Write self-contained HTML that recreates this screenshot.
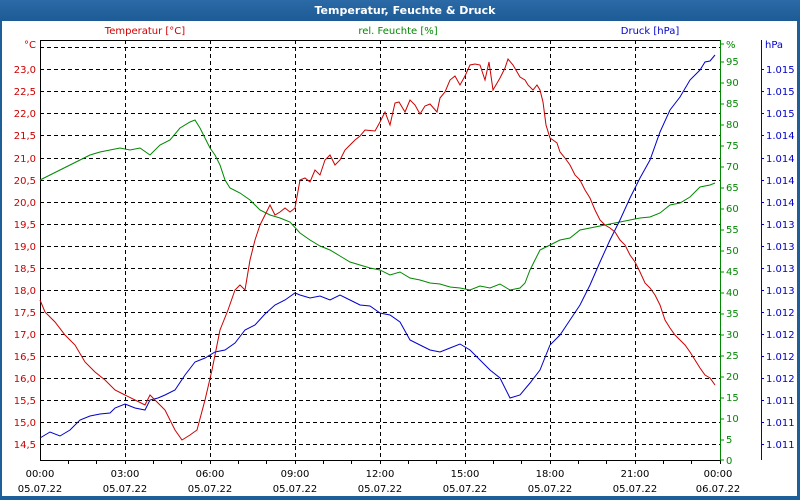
<!DOCTYPE html>
<html><head><meta charset="utf-8"><style>
html,body{margin:0;padding:0;width:800px;height:500px;overflow:hidden;background:#fff;font-family:"Liberation Sans",sans-serif}
</style></head><body>
<svg width="800" height="500" xmlns="http://www.w3.org/2000/svg" font-family="Tahoma,'DejaVu Sans','Liberation Sans',sans-serif" font-size="10">
<defs><linearGradient id="g" x1="0" y1="0" x2="0" y2="1"><stop offset="0" stop-color="#2b6aa6"/><stop offset="1" stop-color="#1d5b96"/></linearGradient></defs>
<rect x="0" y="0" width="800" height="500" fill="#1f5f99"/>
<rect x="2" y="21" width="795" height="475" fill="#fff"/>
<rect x="0" y="0" width="800" height="21" fill="url(#g)"/>
<text x="405" y="14" fill="#fff" font-weight="bold" font-size="11" text-anchor="middle">Temperatur, Feuchte &amp; Druck</text>
<text x="145" y="34" fill="#c00" text-anchor="middle">Temperatur [°C]</text>
<text x="398" y="34" fill="#080" text-anchor="middle">rel. Feuchte [%]</text>
<text x="650" y="34" fill="#00c" text-anchor="middle">Druck [hPa]</text>
<g stroke="#000" stroke-dasharray="4,3" stroke-width="1">
<path d="M40 47.5H720M40 69.5H720M40 91.5H720M40 113.5H720M40 135.5H720M40 158.5H720M40 180.5H720M40 202.5H720M40 224.5H720M40 246.5H720M40 268.5H720M40 290.5H720M40 312.5H720M40 334.5H720M40 356.5H720M40 378.5H720M40 400.5H720M40 422.5H720M40 444.5H720"/>
<path d="M125.5 40V460M210.5 40V460M295.5 40V460M380.5 40V460M465.5 40V460M550.5 40V460M635.5 40V460"/>
</g>
<g stroke="#000" fill="none"><path d="M40.5 40V460.5H720"/><path d="M40 40.5H720"/>
<path d="M68.5 460v4M96.5 460v4M125.5 460v4M153.5 460v4M181.5 460v4M210.5 460v4M238.5 460v4M266.5 460v4M295.5 460v4M323.5 460v4M351.5 460v4M380.5 460v4M408.5 460v4M436.5 460v4M465.5 460v4M493.5 460v4M521.5 460v4M550.5 460v4M578.5 460v4M606.5 460v4M635.5 460v4M663.5 460v4M691.5 460v4M720.5 460v4"/></g>
<path d="M720.5 40V460" stroke="#080"/>
<path d="M761.5 40V460" stroke="#00c"/>
<g fill="#c00" text-anchor="end">
<text x="36" y="48">°C</text><text x="36" y="73">23,0</text><text x="36" y="95">22,5</text><text x="36" y="117">22,0</text><text x="36" y="139">21,5</text><text x="36" y="162">21,0</text><text x="36" y="184">20,5</text><text x="36" y="206">20,0</text><text x="36" y="228">19,5</text><text x="36" y="250">19,0</text><text x="36" y="272">18,5</text><text x="36" y="294">18,0</text><text x="36" y="316">17,5</text><text x="36" y="338">17,0</text><text x="36" y="360">16,5</text><text x="36" y="382">16,0</text><text x="36" y="404">15,5</text><text x="36" y="426">15,0</text><text x="36" y="448">14,5</text>
</g>
<g fill="#080"><path d="M720 44h4M720 62h4M720 83h4M720 104h4M720 125h4M720 146h4M720 167h4M720 188h4M720 209h4M720 230h4M720 251h4M720 272h4M720 293h4M720 314h4M720 335h4M720 356h4M720 377h4M720 398h4M720 419h4M720 440h4M720 460h4" stroke="#080"/>
<text x="726" y="48">%</text><text x="726" y="65">95</text><text x="726" y="86">90</text><text x="726" y="107">85</text><text x="726" y="128">80</text><text x="726" y="149">75</text><text x="726" y="170">70</text><text x="726" y="191">65</text><text x="726" y="212">60</text><text x="726" y="233">55</text><text x="726" y="254">50</text><text x="726" y="275">45</text><text x="726" y="296">40</text><text x="726" y="317">35</text><text x="726" y="338">30</text><text x="726" y="359">25</text><text x="726" y="380">20</text><text x="726" y="401">15</text><text x="726" y="422">10</text><text x="726" y="443">5</text><text x="726" y="464">0</text></g>
<g fill="#00c"><path d="M761 69.5h3M761 91.5h3M761 113.5h3M761 135.5h3M761 158.5h3M761 180.5h3M761 202.5h3M761 224.5h3M761 246.5h3M761 268.5h3M761 290.5h3M761 312.5h3M761 334.5h3M761 356.5h3M761 378.5h3M761 400.5h3M761 422.5h3M761 444.5h3" stroke="#00c"/>
<text x="765" y="48">hPa</text><text x="766" y="73">1.015</text><text x="766" y="95">1.015</text><text x="766" y="117">1.015</text><text x="766" y="139">1.014</text><text x="766" y="162">1.014</text><text x="766" y="184">1.014</text><text x="766" y="206">1.014</text><text x="766" y="228">1.013</text><text x="766" y="250">1.013</text><text x="766" y="272">1.013</text><text x="766" y="294">1.013</text><text x="766" y="316">1.012</text><text x="766" y="338">1.012</text><text x="766" y="360">1.012</text><text x="766" y="382">1.012</text><text x="766" y="404">1.011</text><text x="766" y="426">1.011</text><text x="766" y="448">1.011</text></g>
<g fill="#000" text-anchor="middle">
<text x="40" y="477">00:00</text><text x="40" y="492">05.07.22</text>
<text x="125" y="477">03:00</text><text x="125" y="492">05.07.22</text>
<text x="210" y="477">06:00</text><text x="210" y="492">05.07.22</text>
<text x="295" y="477">09:00</text><text x="295" y="492">05.07.22</text>
<text x="380" y="477">12:00</text><text x="380" y="492">05.07.22</text>
<text x="465" y="477">15:00</text><text x="465" y="492">05.07.22</text>
<text x="550" y="477">18:00</text><text x="550" y="492">05.07.22</text>
<text x="635" y="477">21:00</text><text x="635" y="492">05.07.22</text>
<text x="718" y="477">00:00</text><text x="718" y="492">06.07.22</text>
</g>
<g fill="none" stroke-width="1">
<polyline stroke="#080" points="40,180 50,175 60,170 70,165 80,160 90,155 100,152 110,150 120,148 130,150 140,148 150,155 160,145 170,140 180,128 190,122 195,120 200,128 205,138 210,148 215,155 220,165 225,180 230,188 240,193 250,200 260,210 270,215 280,218 290,222 300,233 310,240 320,246 330,250 340,256 350,262 360,265 370,268 380,270 390,275 400,272 410,278 420,280 430,283 440,284 450,287 460,288 470,290 480,286 490,288 500,284 510,290 520,288 525,283 530,270 540,250 550,245 560,240 570,238 580,230 590,228 600,226 610,224 620,222 630,220 640,218 650,217 660,213 670,205 680,203 690,197 700,187 710,185 715,183"/>
<polyline stroke="#00c" points="40,438 50,432 60,436 70,430 80,420 90,416 100,414 110,413 115,408 125,404 135,408 145,410 150,400 158,398 165,395 175,390 185,375 195,362 205,358 215,352 225,350 235,343 245,330 255,325 265,314 275,305 285,300 295,293 300,295 310,298 320,296 330,300 340,295 350,300 360,305 370,306 380,313 390,315 400,322 410,340 420,345 430,350 440,352 450,348 460,344 470,350 480,360 490,370 500,378 510,398 520,395 530,383 540,370 550,345 560,335 570,320 580,305 590,285 600,262 610,240 620,220 630,198 640,178 650,160 660,132 670,110 680,97 690,80 700,70 705,62 710,61 715,55"/>
<polyline stroke="#c00" points="40,300 45,312 55,322 65,335 75,345 85,362 95,372 105,380 115,390 125,395 135,400 145,405 150,395 155,400 165,410 175,430 182,440 190,435 197,430 205,400 212,370 220,330 228,310 235,290 240,285 245,290 250,260 255,240 260,225 265,215 270,205 275,215 280,212 285,208 290,212 295,208 300,180 305,178 310,182 315,170 320,175 325,160 330,155 335,165 340,160 345,150 350,145 355,140 360,136 365,130 375,131 380,122 385,112 390,125 395,103 399,102 405,112 410,100 415,105 420,114 425,106 430,104 437,112 440,98 445,92 450,80 455,76 460,85 465,76 470,65 475,64 480,65 485,80 489,62 493,90 500,78 505,68 508,59 513,65 520,77 525,80 528,85 533,90 537,85 540,90 543,102 546,125 550,138 553,140 557,143 560,152 565,158 570,165 575,175 580,180 585,190 590,198 595,210 600,220 605,225 610,228 615,232 620,240 625,245 630,255 635,262 640,272 645,283 650,288 655,295 660,305 665,320 670,328 675,335 680,340 685,345 690,352 695,360 700,368 705,375 710,378 715,385"/>
</g>
</svg>
</body></html>
